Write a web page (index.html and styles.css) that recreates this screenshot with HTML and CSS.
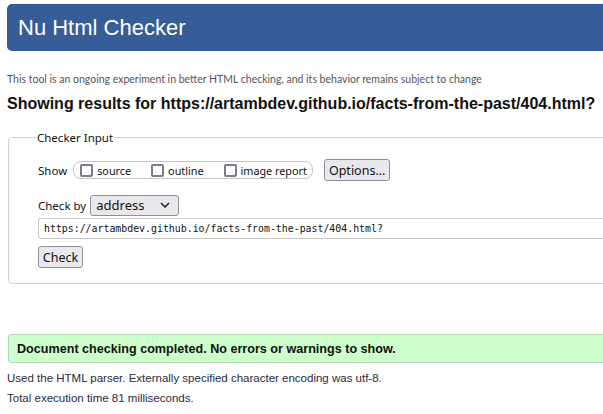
FILE: index.html
```html
<!DOCTYPE html>
<html>
<head>
<meta charset="utf-8">
<link rel="stylesheet" href="styles.css">
</head>
<body>
<div class="page">
  <header class="banner"><h1>Nu Html Checker</h1></header>
  <p class="intro">This tool is an ongoing experiment in better HTML checking, and its behavior remains subject to change</p>
  <h2 class="showing">Showing results for https://artambdev.github.io/facts-from-the-past/404.html?</h2>
  <fieldset class="input-box">
    <legend>Checker Input</legend>
    <div class="row show-row">
      <span class="lbl">Show</span>
      <span class="pill">
        <label class="opt"><span class="cb"></span>source</label>
        <label class="opt"><span class="cb"></span>outline</label>
        <label class="opt"><span class="cb"></span>image report</label>
      </span>
      <span class="btn options">Options...</span>
    </div>
    <div class="row by-row">
      <span class="lbl">Check by</span>
      <span class="select">address<svg width="10" height="6" viewBox="0 0 10 6"><path d="M1 1 L5 5 L9 1" fill="none" stroke="#222" stroke-width="1.5"/></svg></span>
    </div>
    <div class="url">https://artambdev.github.io/facts-from-the-past/404.html?</div>
    <div class="row"><span class="btn check">Check</span></div>
  </fieldset>
  <div class="success">Document checking completed. No errors or warnings to show.</div>
  <p class="details first">Used the HTML parser. Externally specified character encoding was utf-8.</p>
  <p class="details">Total execution time 81 milliseconds.</p>
</div>
</body>
</html>
```
FILE: styles.css
```css
html, body { margin: 0; padding: 0; overflow: hidden; background: #fff; }
.page {
  width: 640px;
  padding: 4px 0 0 7px;
  font-family: "Liberation Sans", Arial, sans-serif;
  color: #222;
}
.banner {
  background: #365d95;
  border-radius: 5px;
  height: 47px;
  display: flex;
  align-items: center;
  padding-left: 11px;
}
.banner h1 {
  margin: 0;
  font-weight: normal;
  font-size: 22px;
  color: #fff;
}
.intro {
  margin: 21px 0 0 0;
  font-family: "Lato", sans-serif;
  font-size: 10.5px;
  color: #555;
  line-height: 14px;
}
.showing {
  margin: 8px 0 0 0;
  font-size: 16px;
  font-weight: bold;
  color: #111;
  line-height: 20px;
}
.input-box {
  margin: 16px 0 0 1px;
  border: 1px solid #cfcfcf;
  border-radius: 4px;
  padding: 13px 0 15px 29px;
  font-family: "Noto Sans", sans-serif;
  font-size: 11.5px;
  color: #111;
}
.input-box legend {
  padding: 0 1px;
  margin-left: -2px;
  font-size: 11.5px;
}
.row { display: flex; align-items: center; }
.show-row { height: 24px; }
.lbl { margin-right: 4px; }
.show-row .lbl { margin-right: 6px; }
.pill {
  display: flex;
  align-items: center;
  height: 18px;
  box-sizing: border-box;
  border: 1px solid #c4c4c4;
  border-radius: 8px;
  padding: 0 0 0 6px;
  width: 240px;
  font-size: 10.8px;
}
.opt { display: flex; align-items: center; margin-right: 20px; }
.opt:last-child { margin-right: 0; }
.cb {
  width: 13px;
  height: 13px;
  border: 2px solid #7b7b8e;
  border-radius: 2px;
  margin-right: 4px;
  box-sizing: border-box;
}
.btn {
  display: inline-flex;
  align-items: center;
  justify-content: center;
  background: #e9e9ed;
  border: 1px solid #8f8f9d;
  border-radius: 3px;
  box-sizing: border-box;
}
.options { margin-left: 11px; width: 66px; height: 22px; font-size: 12.5px; }
.by-row { margin-top: 12px; height: 22px; }
.select {
  display: inline-flex;
  align-items: center;
  justify-content: space-between;
  width: 89px;
  height: 21px;
  box-sizing: border-box;
  border: 1px solid #8f8f9d;
  border-radius: 3px;
  background: #e9e9ed;
  padding: 0 8px 0 5px;
  font-size: 13px;
}
.url {
  margin-top: 2px;
  height: 21px;
  box-sizing: border-box;
  border: 1px solid #c8c8c8;
  border-right: none;
  border-radius: 3px 0 0 3px;
  padding: 0 5px;
  display: flex;
  align-items: center;
  font-family: "DejaVu Sans Mono", monospace;
  font-size: 9.9px;
}
.check { margin-top: 7px; width: 45px; height: 22px; font-size: 12.5px; }
.success {
  margin: 50px 0 0 1px;
  height: 29px;
  box-sizing: border-box;
  background: #ccffcc;
  border: 1px solid #b6d8b6;
  border-radius: 3px;
  display: flex;
  align-items: center;
  padding-left: 8px;
  font-weight: bold;
  font-size: 12.6px;
  color: #111;
}
.details {
  margin: 7px 0 0 0;
  font-size: 11.5px;
  line-height: 13px;
  color: #2a2a3a;
}
.details.first { margin-top: 9px; }
```
